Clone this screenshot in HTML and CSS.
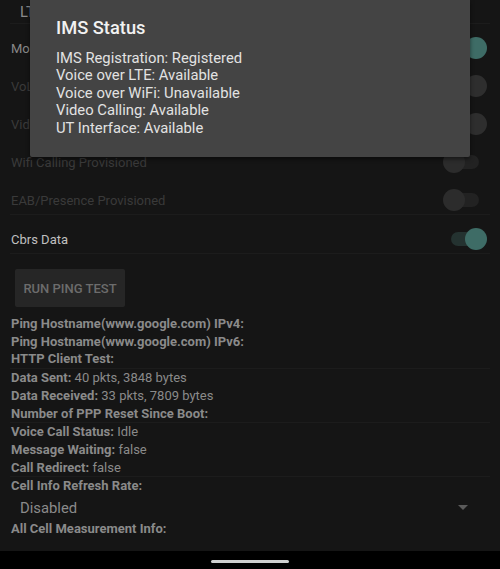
FILE: index.html
```html
<!DOCTYPE html>
<html>
<head>
<meta charset="utf-8">
<link rel="stylesheet" href="styles.css">
</head>
<body>
<div class="screen">
  <main class="content">
    <div class="spinner spinner-top">
      <span class="spinner-value">LTE/GSM/WCDMA</span>
      <span class="arrow"></span>
    </div>
    <div class="divider"></div>
    <div class="pref"><span class="pref-label mid">Mobile Radio Power</span><span class="toggle on"><span class="track"></span><span class="thumb"></span></span></div>
    <div class="pref"><span class="pref-label dim">VoLTE Provisioned</span><span class="toggle on disabled"><span class="track"></span><span class="thumb"></span></span></div>
    <div class="pref"><span class="pref-label dim">Video Calling Provisioned</span><span class="toggle on disabled"><span class="track"></span><span class="thumb"></span></span></div>
    <div class="pref"><span class="pref-label dim">Wifi Calling Provisioned</span><span class="toggle disabled"><span class="track"></span><span class="thumb"></span></span></div>
    <div class="pref"><span class="pref-label dim">EAB/Presence Provisioned</span><span class="toggle disabled"><span class="track"></span><span class="thumb"></span></span></div>
    <div class="divider"></div>
    <div class="pref"><span class="pref-label bright">Cbrs Data</span><span class="toggle on"><span class="track"></span><span class="thumb"></span></span></div>
    <div class="divider"></div>
    <button class="ping-btn" type="button">Run Ping Test</button>
    <div class="info">
      <div class="line"><b>Ping Hostname(www.google.com) IPv4:</b></div>
      <div class="line"><b>Ping Hostname(www.google.com) IPv6:</b></div>
      <div class="line"><b>HTTP Client Test:</b></div>
      <div class="divider"></div>
      <div class="line"><b>Data Sent:</b> <span>40 pkts, 3848 bytes</span></div>
      <div class="line"><b>Data Received:</b> <span>33 pkts, 7809 bytes</span></div>
      <div class="line"><b>Number of PPP Reset Since Boot:</b></div>
      <div class="divider"></div>
      <div class="line"><b>Voice Call Status:</b> <span>Idle</span></div>
      <div class="line"><b>Message Waiting:</b> <span>false</span></div>
      <div class="line"><b>Call Redirect:</b> <span>false</span></div>
      <div class="divider"></div>
      <div class="line"><b>Cell Info Refresh Rate:</b></div>
      <div class="spinner">
        <span class="spinner-value">Disabled</span>
        <span class="arrow"></span>
      </div>
      <div class="line"><b>All Cell Measurement Info:</b></div>
    </div>
  </main>
  <div class="navbar"><span class="handle"></span></div>

  <div class="dialog">
    <h2 class="dialog-title">IMS Status</h2>
    <div class="dialog-body">
      <div>IMS Registration: Registered</div>
      <div>Voice over LTE: Available</div>
      <div>Voice over WiFi: Unavailable</div>
      <div>Video Calling: Available</div>
      <div>UT Interface: Available</div>
    </div>
  </div>
</div>
</body>
</html>
```
FILE: styles.css
```css
html, body {
  margin: 0;
  padding: 0;
  background: #000;
}
body {
  font-family: Roboto, "Noto Sans", "Liberation Sans", sans-serif;
}
.screen {
  position: relative;
  width: 500px;
  height: 569px;
  overflow: hidden;
  display: flex;
  flex-direction: column;
  background: #151515;
}
.content {
  height: 551px;
  flex: none;
  overflow: hidden;
  padding: 0 10px;
  box-sizing: border-box;
}
.divider {
  height: 1px;
  background: #1c1c1c;
}
.spinner {
  display: flex;
  align-items: center;
  justify-content: space-between;
  height: 25px;
  padding: 0 22px 0 10px;
}
.spinner-top {
  height: 23px;
}
.spinner-value {
  font-size: 14.8px;
  color: #8a8a8a;
}
.arrow {
  width: 0;
  height: 0;
  border-left: 5px solid transparent;
  border-right: 5px solid transparent;
  border-top: 5px solid #5a5a5a;
}
.pref {
  height: 38px;
  box-sizing: border-box;
  padding: 10px 3px 0 1px;
  display: flex;
  align-items: center;
  justify-content: space-between;
}
.pref-label {
  font-size: 13px;
}
.pref-label.mid { color: #888; }
.pref-label.dim { color: #3a3a3a; }
.pref-label.bright { color: #c0c0c0; }
.toggle {
  position: relative;
  width: 44px;
  height: 22px;
  flex: none;
}
.toggle .track {
  position: absolute;
  left: 8px;
  right: 8px;
  top: 4px;
  height: 14px;
  border-radius: 7px;
  background: #222;
}
.toggle .thumb {
  position: absolute;
  top: 0;
  left: 0;
  width: 22px;
  height: 22px;
  border-radius: 50%;
  background: #2c2c2c;
}
.toggle.on .thumb {
  left: auto;
  right: 0;
  background: #3e6c66;
}
.toggle.on .track {
  background: #243230;
}
.toggle.on.disabled .thumb {
  background: #2e2e2e;
}
.toggle.on.disabled .track {
  background: #222;
}
.ping-btn {
  display: block;
  margin: 15px 0 0 5px;
  width: 110px;
  height: 38px;
  border: none;
  border-radius: 2px;
  background: #262626;
  color: #6c6c6c;
  font-family: inherit;
  font-size: 13px;
  font-weight: 500;
  text-transform: uppercase;
  letter-spacing: 0;
  padding: 0;
}
.info {
  margin-top: 8px;
}
.line {
  font-size: 13px;
  line-height: 17.7px;
  color: #8a8a8a;
  padding-left: 1px;
  white-space: nowrap;
}
.line b {
  font-weight: 700;
}
.navbar {
  flex: 1;
  background: #000;
  display: flex;
  justify-content: center;
  align-items: center;
  padding-top: 3px;
  box-sizing: border-box;
}
.handle {
  width: 78px;
  height: 3px;
  border-radius: 2px;
  background: #cfcfcf;
}
.dialog {
  position: absolute;
  left: 30px;
  top: 0;
  width: 440px;
  height: 157px;
  box-sizing: border-box;
  background: #444;
  border-radius: 0 0 2px 2px;
  box-shadow: 0 2px 4px rgba(0, 0, 0, 0.5);
  padding: 16px 26px 0;
}
.dialog-title {
  margin: 0;
  font-size: 18.3px;
  line-height: 24px;
  font-weight: 500;
  color: #f2f2f2;
}
.dialog-body {
  margin-top: 9.6px;
  font-size: 14.8px;
  line-height: 17.6px;
  color: #e2e2e2;
}
```
